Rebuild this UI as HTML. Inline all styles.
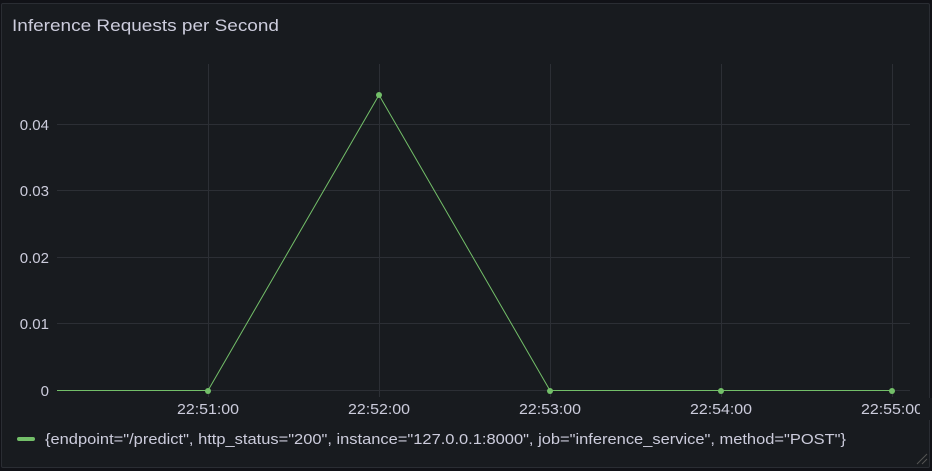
<!DOCTYPE html><html><head><style>
body{margin:0;width:932px;height:471px;background:#111217;overflow:hidden;font-family:"Liberation Sans",sans-serif}
.p{position:absolute;left:1px;top:3px;width:927px;height:463px;background:#181b1f;border:1px solid #2a2d33;border-radius:2px;overflow:hidden}
</style></head><body><div class="p"></div>
<svg width="932" height="471" style="position:absolute;left:0;top:0" font-family="Liberation Sans, sans-serif">
<text x="12" y="31" fill="#ccccdc" font-size="16.5" textLength="267" lengthAdjust="spacingAndGlyphs">Inference Requests per Second</text>
<g stroke="#2c2f35" stroke-width="1">
<line x1="57" x2="910" y1="124.5" y2="124.5"/><line x1="57" x2="910" y1="190.5" y2="190.5"/><line x1="57" x2="910" y1="257.5" y2="257.5"/><line x1="57" x2="910" y1="323.5" y2="323.5"/><line x1="57" x2="910" y1="390.5" y2="390.5"/>
<line x1="208.5" x2="208.5" y1="64" y2="397"/><line x1="379.5" x2="379.5" y1="64" y2="397"/><line x1="550.5" x2="550.5" y1="64" y2="397"/><line x1="721.5" x2="721.5" y1="64" y2="397"/><line x1="892.5" x2="892.5" y1="64" y2="397"/>
</g>
<g fill="#ccccdc" font-size="15" text-anchor="end">
<text x="49" y="130">0.04</text><text x="49" y="196">0.03</text><text x="49" y="263">0.02</text><text x="49" y="329">0.01</text><text x="49" y="396">0</text></g>
<g fill="#ccccdc" font-size="15" text-anchor="middle">
<text x="208" y="414" textLength="62" lengthAdjust="spacingAndGlyphs">22:51:00</text><text x="379" y="414" textLength="62" lengthAdjust="spacingAndGlyphs">22:52:00</text><text x="550" y="414" textLength="62" lengthAdjust="spacingAndGlyphs">22:53:00</text><text x="721" y="414" textLength="62" lengthAdjust="spacingAndGlyphs">22:54:00</text><text x="892" y="414" textLength="62" lengthAdjust="spacingAndGlyphs">22:55:00</text></g>
<rect x="920" y="398" width="12" height="22" fill="#181b1f"/>
<polyline points="57,390.5 208,390.5 379,95 550,390.5 892,390.5" fill="none" stroke="#73bf69" stroke-width="1"/>
<g fill="#73bf69"><circle cx="208" cy="391" r="3"/><circle cx="379" cy="95" r="3"/><circle cx="550" cy="391" r="3"/><circle cx="721" cy="391" r="3"/><circle cx="892" cy="391" r="3"/></g>
<rect x="17" y="437" width="18" height="4" rx="2" fill="#73bf69"/>
<text x="45" y="444" fill="#ccccdc" font-size="15" textLength="801" lengthAdjust="spacingAndGlyphs">{endpoint="/predict", http_status="200", instance="127.0.0.1:8000", job="inference_service", method="POST"}</text>
<g stroke="#555" stroke-width="1"><line x1="917" y1="464" x2="927" y2="454"/><line x1="922" y1="464" x2="927" y2="459"/></g>
</svg></body></html>
